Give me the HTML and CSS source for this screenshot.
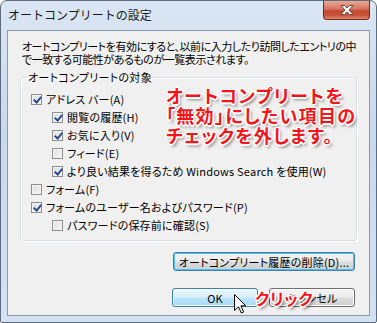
FILE: index.html
```html
<!DOCTYPE html>
<html lang="ja">
<head>
  <meta charset="UTF-8" />
  <title>オートコンプリートの設定</title>
  <link rel="stylesheet" href="styles.css">
</head>
<body>
  <div class="window">
    <div class="titlebar">
      <div class="title">オートコンプリートの設定</div>
      <div class="close">
        <svg width="20" height="12" viewBox="0 0 20 12">
          <path d="M4 1.5h3.5l2.5 2.6 2.5-2.6H16l-4 4.5 4 4.5h-3.5L10 7.9 7.5 10.5H4l4-4.5z" fill="#fff" stroke="#5b4a48" stroke-width="1" stroke-linejoin="round"/>
        </svg>
      </div>
    </div>

    <div class="client">
      <p class="desc">オートコンプリートを有効にすると、以前に入力したり訪問したエントリの中<br>で一致する可能性があるものが一覧表示されます。</p>

      <fieldset class="group">
        <legend>オートコンプリートの対象</legend>
        <div class="row"><span class="cb on"></span>アドレス バー(A)</div>
        <div class="row sub"><span class="cb on"></span>閲覧の履歴(H)</div>
        <div class="row sub"><span class="cb on"></span>お気に入り(V)</div>
        <div class="row sub"><span class="cb"></span>フィード(E)</div>
        <div class="row sub"><span class="cb on"></span>より良い結果を得るため Windows Search を使用(W)</div>
        <div class="row"><span class="cb"></span>フォーム(F)</div>
        <div class="row"><span class="cb on"></span>フォームのユーザー名およびパスワード(P)</div>
        <div class="row sub"><span class="cb"></span>パスワードの保存前に確認(S)</div>
      </fieldset>

      <div class="actions">
        <button class="btn focus wide">オートコンプリート履歴の削除(D)...</button>
      </div>
      <div class="actions bottom">
        <button class="btn hover">OK</button>
        <button class="btn">キャンセル</button>
      </div>
    </div>

    <div class="note">オートコンプリートを<br>「無効」にしたい項目の<br>チェックを外します。</div>
    <div class="note click">クリック</div>
    <svg class="pointer" width="13" height="20" viewBox="0 0 13 20">
      <path d="M0.5 0.5V16.5L4.5 12.8L7.3 19L9.6 18L6.9 11.8H11.8Z" fill="#fff" stroke="#000" stroke-width="1" stroke-linejoin="round"/>
    </svg>
  </div>
</body>
</html>
```

FILE: styles.css
```css
body {
  margin: 0;
  background: #fff;
  font-family: "Noto Sans CJK JP", "Noto Sans", sans-serif;
  color: #000;
}
.window {
  position: relative;
  width: 377px;
  height: 323px;
  box-sizing: border-box;
  border: 1px solid #5d6c7c;
  border-radius: 7px 7px 2px 2px;
  background: linear-gradient(#dae6f3, #c9d9ec 40%, #d3e2f3);
  padding: 0 6px 6px 6px;
  display: flex;
  flex-direction: column;
}
.titlebar {
  height: 29px;
  margin: 0 -6px;
  display: flex;
  justify-content: space-between;
  align-items: flex-start;
}
.title {
  padding: 6px 0 0 7px;
  font-size: 12px;
  line-height: 16px;
  color: #1a1a1a;
}
.close {
  width: 45px;
  height: 18px;
  margin-right: 6px;
  border: 1px solid #6e2b20;
  border-top: none;
  border-radius: 0 0 4px 4px;
  background: linear-gradient(#e9a796, #d6735d 45%, #c34a30 55%, #c9523a 80%, #e08a6c);
  display: flex;
  align-items: center;
  justify-content: center;
}
.client {
  flex: 1;
  background: #f0f0f0;
  border: 1px solid #8a99aa;
  padding: 0 12px;
}
.desc {
  margin: 9px 0 0 2px;
  font-size: 11px;
  line-height: 13px;
  font-feature-settings: "palt";
  letter-spacing: -0.45px;
  white-space: nowrap;
}
.group {
  margin: 4px 0 0 0;
  padding: 6px 0 6px 10px;
  border: 1px solid #d5dfe5;
  border-radius: 3px;
  box-shadow: inset 1px 1px #fff, 1px 1px #fff;
  min-width: 0;
}
.group legend {
  margin-left: -5px;
  padding: 0 2px;
  font-size: 11px;
  line-height: 14px;
  font-feature-settings: "palt";
  letter-spacing: 0.3px;
}
.row {
  height: 18px;
  display: flex;
  align-items: center;
  gap: 4px;
  font-size: 11px;
  font-feature-settings: "palt";
  letter-spacing: 0.2px;
}
.row.sub {
  padding-left: 21px;
}
.cb {
  width: 9px;
  height: 9px;
  border: 1px solid #8f8f8f;
  background: linear-gradient(135deg, #dcdcdc, #f8f8f8);
  box-shadow: inset 0 0 0 1px #f4f4f4;
  position: relative;
  flex: none;
}
.cb.on::after {
  content: "";
  position: absolute;
  left: 3px;
  top: 0px;
  width: 3px;
  height: 6px;
  border: solid #2b4a94;
  border-width: 0 2px 2px 0;
  transform: rotate(40deg);
}
.actions {
  display: flex;
  justify-content: flex-end;
  gap: 11px;
  margin: 11px 2px 0 0;
}
.actions.bottom {
  margin-top: 17px;
}
.btn {
  width: 86px;
  height: 19px;
  padding: 0;
  border: 1px solid #707070;
  border-radius: 3px;
  background: linear-gradient(#f3f3f3, #ebebeb 48%, #dddddd 52%, #cfcfcf);
  box-shadow: inset 0 0 0 1px #fcfcfc;
  font-family: inherit;
  font-size: 11px;
  line-height: 16px;
  font-feature-settings: "palt";
  letter-spacing: 0.2px;
  color: #000;
}
.btn.wide {
  width: 182px;
}
.btn.focus {
  border-color: #3c7fb1;
  box-shadow: inset 0 0 0 1px #4fc0f0;
}
.btn.hover {
  border-color: #3c7fb1;
  background: linear-gradient(#eaf6fd, #d9f0fc 48%, #bee6fd 52%, #a7d9f5);
}
.note {
  position: absolute;
  left: 165px;
  top: 84px;
  font-size: 18px;
  line-height: 20px;
  font-weight: bold;
  color: #f5141a;
  font-feature-settings: "palt";
  letter-spacing: 1.3px;
  text-shadow: -1px -1px 0 #fff, 1px -1px 0 #fff, -1px 1px 0 #fff, 1px 1px 0 #fff,
    0 -1.5px 0 #fff, 0 1.5px 0 #fff, -1.5px 0 0 #fff, 1.5px 0 0 #fff,
    2px 3px 3px rgba(0, 0, 0, 0.45);
}
.note.click {
  left: 254px;
  top: 287px;
  font-size: 16px;
  line-height: 20px;
  letter-spacing: 0.5px;
}
.pointer {
  position: absolute;
  left: 233px;
  top: 293px;
}
```
